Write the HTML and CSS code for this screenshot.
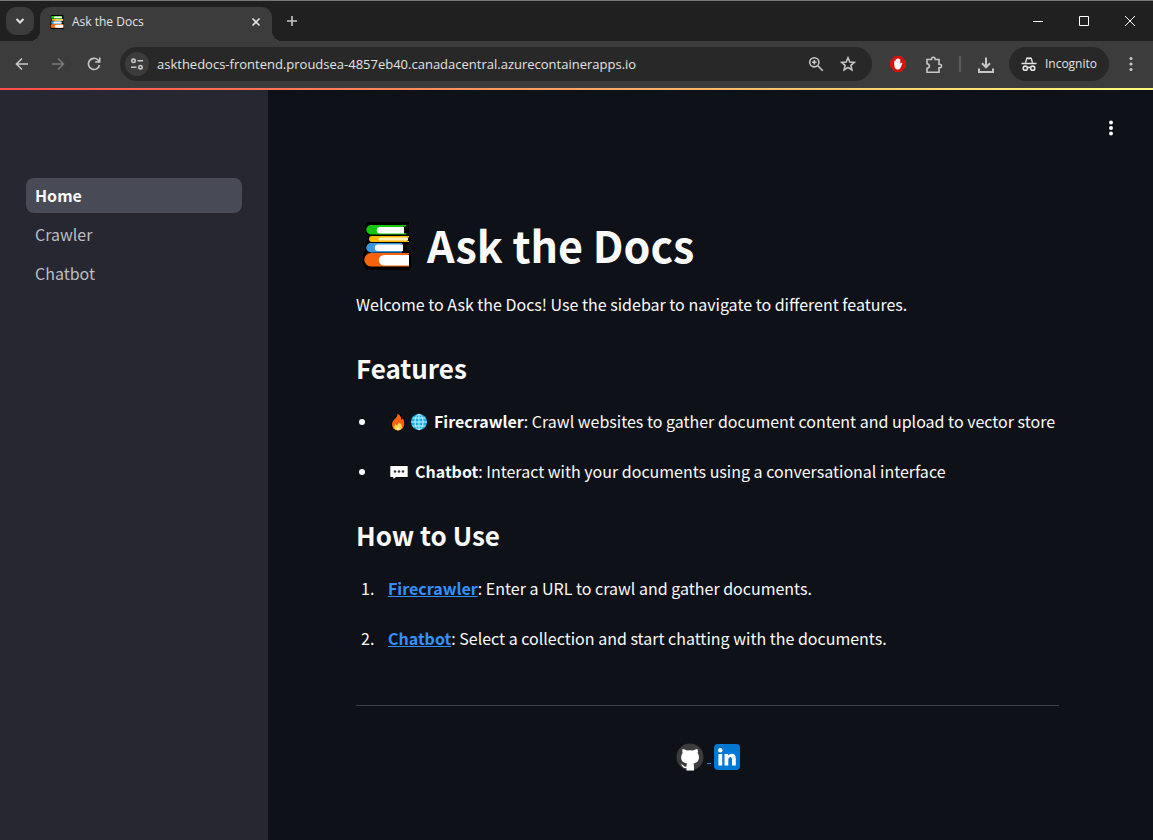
FILE: index.html
```html
<!DOCTYPE html>
<html lang="en">
<head>
<meta charset="utf-8">
<title>Ask the Docs</title>
<link rel="stylesheet" href="styles.css">
</head>
<body>
<svg class="defs" aria-hidden="true">
  <symbol id="books" viewBox="0 0 48 48">
    <path fill="#000" d="M5 0H46V12L48 14V20L44 23V29H48V45L46 48H4L0 43V32L2 29V20L5 18V13L2 10V4Z"/>
    <path fill="#16c60c" d="M8 3H43V4.500H40V11H43V12.500H8A4.700 4.700 0 0 1 8 3Z"/>
    <path fill="#fff" d="M17 5H41V11.500H17A3.200 3.200 0 0 1 17 5Z"/>
    <path fill="#fcb900" d="M9 14H46V15.500H44V19H46V20H9A3 3 0 0 1 9 14Z"/>
    <path fill="#fff3bd" d="M17 15.500H45V18.500H17A1.500 1.500 0 0 1 17 15.500Z"/>
    <path fill="#3a96dd" d="M8 21H39V22H38V29H39V30.500H8A4.700 4.700 0 0 1 8 21Z"/>
    <path fill="#fff" d="M15 22.500H40V29H15A3.200 3.200 0 0 1 15 22.500Z"/>
    <path fill="#f7630c" d="M8 31H46V32.500H45V43H46V44.500H8A6.700 6.700 0 0 1 8 31Z"/>
    <path fill="#fff" d="M21 33H46V43.500H21A5.200 5.200 0 0 1 21 33Z"/>
  </symbol>
</svg>

<header class="browser">
  <div class="tabstrip">
    <button class="tab-search" aria-label="Search tabs"><svg width="12" height="12" viewBox="0 0 12 12"><path class="line strong" d="M2.500 4 6 7.500 9.500 4"/></svg></button>
    <div class="tab">
      <svg class="favicon" width="14" height="14"><use href="#books"/></svg>
      <span class="tab-title">Ask the Docs</span>
      <button class="icon-button" aria-label="Close tab"><svg width="12" height="12" viewBox="0 0 12 12"><path class="line" d="M2.500 2.500 9.500 9.500M9.500 2.500 2.500 9.500"/></svg></button>
    </div>
    <button class="new-tab" aria-label="New tab"><svg width="14" height="14" viewBox="0 0 14 14"><path class="line" d="M7 2V12M2 7H12"/></svg></button>
    <div class="window-controls">
      <button aria-label="Minimize"><svg width="12" height="12" viewBox="0 0 12 12"><path class="thin" d="M1 6.500H11"/></svg></button>
      <button aria-label="Maximize"><svg width="12" height="12" viewBox="0 0 12 12"><path class="thin" d="M1.500 1.500H10.500V10.500H1.500Z"/></svg></button>
      <button aria-label="Close"><svg width="12" height="12" viewBox="0 0 12 12"><path class="thin" d="M1 1 11 11M11 1 1 11"/></svg></button>
    </div>
  </div>
  <div class="toolbar">
    <nav class="history">
      <button class="icon-button" aria-label="Back"><svg width="16" height="16" viewBox="0 0 16 16"><path class="line" d="M14 8H3M8 2.500 2.500 8 8 13.500"/></svg></button>
      <button class="icon-button dim" aria-label="Forward"><svg width="16" height="16" viewBox="0 0 16 16"><path class="line" d="M2 8H13M8 2.500 13.500 8 8 13.500"/></svg></button>
      <button class="icon-button" aria-label="Reload"><svg width="16" height="16" viewBox="0 0 16 16"><path class="line" d="M13.500 9A5.600 5.600 0 1 1 12 4L13.500 5.500M13.700 1.500V6H9.200"/></svg></button>
    </nav>
    <div class="omnibox">
      <button class="site-info" aria-label="Site information"><svg width="14" height="14" viewBox="0 0 14 14"><circle class="line" cx="3.500" cy="3.800" r="1.700"/><path class="line" d="M7.500 3.800H13M1 10.200H6.500"/><circle class="line" cx="10.500" cy="10.200" r="1.700"/></svg></button>
      <input class="url" type="text" aria-label="Address" value="askthedocs-frontend.proudsea-4857eb40.canadacentral.azurecontainerapps.io">
      <button class="icon-button" aria-label="Zoom"><svg width="16" height="16" viewBox="0 0 16 16"><circle class="line" cx="6.300" cy="6.300" r="4.600"/><path class="line" d="M9.800 9.800 14.800 14.800M6.300 4V8.600M4 6.300H8.600"/></svg></button>
      <button class="icon-button" aria-label="Bookmark"><svg width="16" height="16" viewBox="0 0 16 16"><path class="line" d="M8 1.800 9.800 6 14.300 6.400 10.900 9.400 11.900 13.900 8 11.500 4.100 13.900 5.100 9.400 1.700 6.400 6.200 6Z"/></svg></button>
    </div>
    <div class="actions">
      <button class="icon-button" aria-label="Ad blocker"><svg width="16" height="16" viewBox="0 0 16 16"><path fill="#d8120f" d="M5 0H11L16 5V11L11 16H5L0 11V5Z"/><path fill="#fff" d="M4.300 9V5Q4.900 4 5.700 5V3.400Q6.400 2.400 7.200 3.400V2.700Q8 1.700 8.800 2.700V3.400Q9.600 2.600 10.300 3.600V8L11 7Q12.500 6.300 12.300 7.700L10.400 12Q9.700 13.700 7.600 13.600 4.400 13.400 4.300 9Z"/></svg></button>
      <button class="icon-button" aria-label="Extensions"><svg width="18" height="18" viewBox="0 0 18 18"><path class="line" d="M2 3.500H6.500Q6.500 1.300 8.300 1.300T10.200 3.500H14V8.200Q16.500 8 16.500 10T14 11.800V16.200H2V12.300Q4.400 12 4.400 10T2 7.700Z"/></svg></button>
      <span class="divider"></span>
      <button class="icon-button" aria-label="Downloads"><svg width="18" height="18" viewBox="0 0 18 18"><path class="line strong" d="M9 1.500V11M5 7.300 9 11.300 13 7.300M2 12.500V16H16V12.500"/></svg></button>
      <button class="incognito"><svg width="16" height="16" viewBox="0 0 16 16"><path fill="currentColor" d="M3.800 6.800 5 2.500Q5.400.8 7 1.300L8 1.600 9 1.300Q10.600.8 11 2.500L12.200 6.800H10.700L9.800 3 8 3.600 6.200 3 5.300 6.800Z"/><path class="line" d="M.5 7.500H15.500M6.300 11.700Q8 10.700 9.700 11.700"/><circle class="line" cx="4.300" cy="12.200" r="2.100"/><circle class="line" cx="11.700" cy="12.200" r="2.100"/></svg>Incognito</button>
      <button class="icon-button" aria-label="Menu"><svg width="16" height="16" viewBox="0 0 16 16"><g fill="currentColor"><circle cx="8" cy="2.500" r="1.600"/><circle cx="8" cy="8" r="1.600"/><circle cx="8" cy="13.500" r="1.600"/></g></svg></button>
    </div>
  </div>
</header>

<div class="app">
  <aside class="sidebar">
    <nav class="pages">
      <a class="page current" href="#" aria-current="page">Home</a>
      <a class="page" href="#">Crawler</a>
      <a class="page" href="#">Chatbot</a>
    </nav>
  </aside>
  <div class="view">
    <div class="app-bar">
      <button class="icon-button bright" aria-label="Main menu"><svg width="16" height="16" viewBox="0 0 16 16"><g fill="currentColor"><circle cx="8" cy="2.500" r="2"/><circle cx="8" cy="8" r="2"/><circle cx="8" cy="13.500" r="2"/></g></svg></button>
    </div>
    <main class="content">
      <h1><svg width="48" height="48" aria-label="Books"><use href="#books"/></svg>Ask the Docs</h1>
      <p>Welcome to Ask the Docs! Use the sidebar to navigate to different features.</p>
      <h2>Features</h2>
      <ul class="list">
        <li><svg class="emoji" width="18" height="18" viewBox="0 0 18 18"><path fill="#000" d="M8 0Q13 1 13 5L16 8V14Q15 18 9 18 2 18 2 12 2 8 5 6Z"/><path fill="#f7630c" d="M8.500.5Q12.500 2.500 12.300 7L14 5.500Q15.500 8 15.300 11.500 14.500 17 9 17.500 3 17 3 11.500 3 8.500 5.500 6 8.500 4 8.500.5Z"/><path fill="#fcd34d" d="M9 17.500Q5 17 5 13.500L6.500 11 8 12.500 10 9.500Q13.500 12 13 14.500 12 17.300 9 17.500Z"/><path fill="#fff5b8" d="M9 13.500 11 16.500H7.500Z"/></svg><svg class="emoji wide" width="18" height="18" viewBox="0 0 18 18"><circle cx="9" cy="9" r="8" fill="#17aeea"/><g fill="none" stroke="#c9f2ff"><ellipse cx="9" cy="9" rx="4" ry="7.800"/><path d="M9 1V17M1 9H17M2.500 5H15.500M2.500 13H15.500"/></g></svg><strong>Firecrawler</strong>: Crawl websites to gather document content and upload to vector store</li>
        <li><svg class="emoji wide" width="20" height="18" viewBox="0 0 20 18"><path fill="#fff" stroke="#000" d="M.8 2.500H19.200V14.500H7L4 17V14.500H.8Z"/><g fill="#333"><circle cx="6" cy="8.500" r="1.300"/><circle cx="10" cy="8.500" r="1.300"/><circle cx="14" cy="8.500" r="1.300"/></g></svg><strong>Chatbot</strong>: Interact with your documents using a conversational interface</li>
      </ul>
      <h2>How to Use</h2>
      <ol class="list">
        <li><a href="#"><strong>Firecrawler</strong></a>: Enter a URL to crawl and gather documents.</li>
        <li><a href="#"><strong>Chatbot</strong></a>: Select a collection and start chatting with the documents.</li>
      </ol>
      <hr>
      <footer class="social">
        <a href="#" aria-label="GitHub"><svg width="28" height="28" viewBox="0 0 28 28"><circle cx="14" cy="14" r="13.500" fill="#3c3c3d"/><path fill="#fff" d="M6.500 6Q9 6 11 7.500Q14 7 17 7.500Q19.500 6 21.500 6Q22.200 8 21.700 10Q23.200 12 23 15Q22.600 19.500 17.500 20.500Q18 21.500 18 23V27.500H10.500V25Q7.500 25.500 6.500 23.500Q5.800 22 4.500 21.500Q6.500 21 7.700 22.700Q8.700 24 10.500 23.500Q10.500 21.500 11.200 20.500Q5.400 19.500 5.100 15Q5 12 6.600 10Q6 8 6.500 6Z"/></svg></a>
        <a class="dash" href="#" aria-label="Profiles"></a>
        <a href="#" aria-label="LinkedIn"><svg width="26" height="26" viewBox="0 0 26 26"><rect width="26" height="26" rx="4" fill="#0078d4"/><g fill="#fff"><circle cx="6.300" cy="6.300" r="2.200"/><path d="M4.400 10H8.200V21.500H4.400ZM10.500 10H14.100V11.600Q15.300 9.700 17.800 9.700Q21.800 9.700 21.800 14.500V21.500H18V15.300Q18 13 16.300 13Q14.300 13 14.300 15.500V21.500H10.500Z"/></g></svg></a>
      </footer>
    </main>
  </div>
</div>
</body>
</html>
```
FILE: styles.css
```css
* { box-sizing: border-box; }

body {
  margin: 0;
  min-height: 100vh;
  display: flex;
  flex-direction: column;
  background: #0e1117;
  color: #fafafa;
  font: 16px/28px "Noto Sans CJK SC", "Noto Sans", sans-serif;
}

button, input { font: inherit; color: inherit; border: 0; padding: 0; background: none; }
svg { display: block; }
.defs { position: absolute; width: 0; height: 0; }
.line, .thin { fill: none; stroke: currentColor; stroke-width: 1.600; }
.strong { stroke-width: 2; }
.thin { stroke-width: 1; }

/* Browser frame */
.browser {
  background: #3c3c3c;
  color: #c7c7c7;
  font: 12px/16px "Open Sans", "Noto Sans", sans-serif;
}
.tabstrip {
  display: flex;
  align-items: stretch;
  height: 41px;
  padding-left: 6px;
  background: #202020;
  border-top: 1px solid #777;
}
.tab-search {
  display: grid;
  place-items: center;
  width: 28px;
  height: 28px;
  margin: 6px 6px 0 0;
  border-radius: 10px;
  background: #3c3c3c;
  color: #e3e3e3;
}
.tab {
  position: relative;
  display: flex;
  align-items: center;
  gap: 8px;
  width: 232px;
  margin-top: 6px;
  padding: 0 8px 5px 10px;
  border-radius: 10px 10px 0 0;
  background: #3c3c3c;
  color: #e3e3e3;
}
.tab::before, .tab::after {
  content: "";
  position: absolute;
  bottom: 0;
  width: 10px;
  height: 10px;
}
.tab::before { right: 100%; background: radial-gradient(circle at 0 0, #202020 10px, #3c3c3c 10px); }
.tab::after { left: 100%; background: radial-gradient(circle at 100% 0, #202020 10px, #3c3c3c 10px); }
.tab-title { flex: 1; }
.icon-button { display: grid; place-items: center; width: 16px; height: 16px; flex: none; }
.new-tab { width: 40px; display: grid; place-items: center; }
.window-controls { display: flex; margin-left: auto; color: #fff; }
.window-controls button { width: 46px; display: grid; place-items: center; }

.toolbar {
  display: flex;
  align-items: center;
  height: 47px;
  padding: 0 13px 2px 14px;
}
.history { display: flex; gap: 20px; }
.dim { color: #777; }
.omnibox {
  display: flex;
  align-items: center;
  flex: 1;
  gap: 16px;
  height: 34px;
  margin: 0 17px 0 18px;
  padding: 0 16px 0 5px;
  border-radius: 17px;
  background: #282828;
}
.site-info {
  display: grid;
  place-items: center;
  flex: none;
  width: 24px;
  height: 24px;
  border-radius: 50%;
  background: #3c3c3c;
}
.url { flex: 1; min-width: 0; height: 24px; margin-left: -8px; font-size: 13px; color: #e3e3e3; }
.actions { display: flex; align-items: center; gap: 14px; }
.actions .icon-button { min-width: 18px; }
.actions > :first-child { margin-right: 4px; }
.actions > :last-child { margin-left: -1px; }
.divider { width: 2px; height: 16px; margin: 0 2px; background: #5c5c5c; }
.incognito {
  display: flex;
  align-items: center;
  gap: 8px;
  height: 34px;
  padding: 0 12px;
  border-radius: 17px;
  background: #282828;
  color: #e3e3e3;
}

/* App */
.app {
  display: flex;
  flex: 1;
  border-top: 2px solid;
  border-image: linear-gradient(90deg, #ff4b4b, #fffd80) 1;
}
.sidebar { width: 268px; flex: none; padding: 88px 26px; background: #262730; }
.pages { display: flex; flex-direction: column; gap: 4px; }
.page {
  padding: 0 9px;
  line-height: 35px;
  border-radius: 8px;
  color: #bdbec2;
  text-decoration: none;
}
.current { background: #484a55; color: #fafafa; font-weight: 700; }
.view { flex: 1; min-width: 0; }
.app-bar { display: flex; justify-content: flex-end; padding: 30px 34px; }
.bright { color: #fafafa; }
.content { padding: 52px 94px 40px 88px; }

h1 {
  display: flex;
  align-items: flex-end;
  gap: 16px;
  margin: 0 0 20px;
  padding-left: 7px;
  font-size: 43px;
  line-height: 52px;
}
h2 { margin: 32px 0 21px; font-size: 26px; line-height: 36px; font-weight: 700; }
p { margin: 0; }
.list { display: grid; gap: 22px; margin: 0; padding-left: 22px; }
.list li { padding-left: 10px; }
.emoji { display: inline-block; vertical-align: -3px; margin-right: 3px; }
.emoji:first-child { margin-left: 1px; }
.wide { margin-right: 6px; }
a { color: #3390ff; }
hr { margin: 53px 0 37px; border: 0; border-top: 1px solid #3d4044; }
.social { display: flex; justify-content: center; align-items: center; gap: 3px; }
.dash { align-self: flex-end; width: 4px; height: 8px; border-top: 1px solid; }
```
